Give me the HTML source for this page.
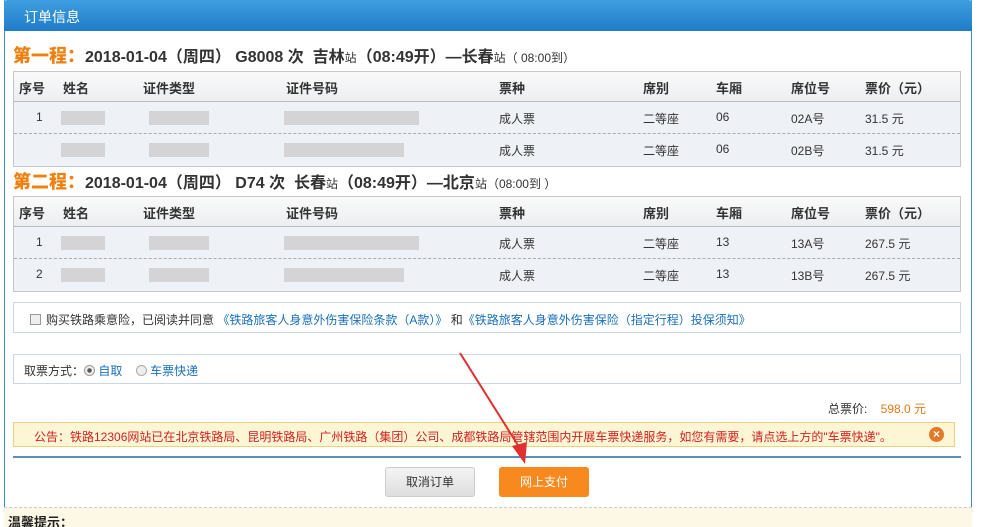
<!DOCTYPE html><html><head><meta charset="utf-8"><style>
*{margin:0;padding:0;box-sizing:border-box}
html,body{width:1000px;height:527px;overflow:hidden}
body{background:#fff;font-family:"Liberation Sans","Noto Sans CJK SC",sans-serif;font-size:12px;color:#333;position:relative}
.a{position:absolute}
.panel{left:4px;top:0;width:968px;height:527px;border:1px solid #3a8fd0;border-top:none}
.hd{left:4px;top:0;width:968px;height:31px;background:linear-gradient(#3f9ee0,#1f7cc8);color:#fff;font-size:14px;padding:7px 0 0 20px;border-radius:3px 3px 0 0}
.ttl{left:13px;font-size:16px;font-weight:bold;color:#333;white-space:nowrap}
.ttl b{color:#f0800d;font-size:18px}
.ttl s{text-decoration:none;font-size:12px;font-weight:normal}
.tb{left:13px;width:948px;height:96px;border:1px solid #c4c8cc}
.th{height:30px;background:linear-gradient(#fafafa,#eceef0);border-bottom:1px solid #b8bcc0;font-weight:bold;font-size:13px}
.r{height:32px;background:#eef1f5}
.r1{border-bottom:1px dashed #aab}
.c{position:absolute;top:8px;white-space:nowrap}
.th .c{top:6px}
.bl{position:absolute;background:#d4d4d6;height:14px;top:9px}
.box{left:13px;width:948px;border:1px solid #c8d8e8;background:#fff}
</style></head><body>
<div class="a panel"></div>
<div class="a hd">订单信息</div>

<div class="a ttl" style="top:42px"><b>第一程：</b>2018-01-04（周四） G8008 次 &nbsp;吉林<s>站</s>（08:49开）—长春<s>站（ 08:00到）</s></div>
<div class="a tb" style="top:71px">
<div class="th" style="position:relative"><span class="c" style="left:5px">序号</span><span class="c" style="left:49px">姓名</span><span class="c" style="left:129px">证件类型</span><span class="c" style="left:272px">证件号码</span><span class="c" style="left:485px">票种</span><span class="c" style="left:629px">席别</span><span class="c" style="left:702px">车厢</span><span class="c" style="left:777px">席位号</span><span class="c" style="left:851px">票价（元）</span></div>
<div class="r r1" style="position:relative"><span class="c" style="left:22px">1</span><i class="bl" style="left:47px;width:44px"></i><i class="bl" style="left:135px;width:60px"></i><i class="bl" style="left:270px;width:135px"></i><span class="c" style="left:485px">成人票</span><span class="c" style="left:629px">二等座</span><span class="c" style="left:702px">06</span><span class="c" style="left:777px">02A号</span><span class="c" style="left:851px">31.5 元</span></div>
<div class="r" style="position:relative"><i class="bl" style="left:47px;width:44px"></i><i class="bl" style="left:135px;width:60px"></i><i class="bl" style="left:270px;width:120px"></i><span class="c" style="left:485px">成人票</span><span class="c" style="left:629px">二等座</span><span class="c" style="left:702px">06</span><span class="c" style="left:777px">02B号</span><span class="c" style="left:851px">31.5 元</span></div>
</div>

<div class="a ttl" style="top:168px"><b>第二程：</b>2018-01-04（周四） D74 次 &nbsp;长春<s>站</s>（08:49开）—北京<s>站（08:00到 ）</s></div>
<div class="a tb" style="top:196px">
<div class="th" style="position:relative"><span class="c" style="left:5px">序号</span><span class="c" style="left:49px">姓名</span><span class="c" style="left:129px">证件类型</span><span class="c" style="left:272px">证件号码</span><span class="c" style="left:485px">票种</span><span class="c" style="left:629px">席别</span><span class="c" style="left:702px">车厢</span><span class="c" style="left:777px">席位号</span><span class="c" style="left:851px">票价（元）</span></div>
<div class="r r1" style="position:relative"><span class="c" style="left:22px">1</span><i class="bl" style="left:47px;width:44px"></i><i class="bl" style="left:135px;width:60px"></i><i class="bl" style="left:270px;width:135px"></i><span class="c" style="left:485px">成人票</span><span class="c" style="left:629px">二等座</span><span class="c" style="left:702px">13</span><span class="c" style="left:777px">13A号</span><span class="c" style="left:851px">267.5 元</span></div>
<div class="r" style="position:relative"><span class="c" style="left:22px">2</span><i class="bl" style="left:47px;width:44px"></i><i class="bl" style="left:135px;width:60px"></i><i class="bl" style="left:270px;width:120px"></i><span class="c" style="left:485px">成人票</span><span class="c" style="left:629px">二等座</span><span class="c" style="left:702px">13</span><span class="c" style="left:777px">13B号</span><span class="c" style="left:851px">267.5 元</span></div>
</div>

<div class="a box" style="top:302px;height:31px;padding:8px 0 0 16px;white-space:nowrap"><span style="display:inline-block;width:11px;height:11px;border:1px solid #999;background:#eee;vertical-align:-1px;margin-right:5px"></span>购买铁路乘意险，已阅读并同意 <span style="color:#1a6fb8">《铁路旅客人身意外伤害保险条款（A款）》</span> 和<span style="color:#1a6fb8">《铁路旅客人身意外伤害保险（指定行程）投保须知》</span></div>

<div class="a box" style="top:354px;height:30px;padding:7px 0 0 10px;white-space:nowrap">取票方式：<span style="display:inline-block;width:11px;height:11px;border:1px solid #999;border-radius:50%;background:radial-gradient(#555 30%,#eee 40%);vertical-align:-1px"></span> <span style="color:#1a6fb8">自取</span> &nbsp;&nbsp;&nbsp;<span style="display:inline-block;width:11px;height:11px;border:1px solid #aaa;border-radius:50%;background:#eee;vertical-align:-1px"></span> <span style="color:#1a6fb8">车票快递</span></div>

<div class="a" style="left:828px;top:400px">总票价: &nbsp;&nbsp;&nbsp;<span style="color:#e07a1a">598.0 元</span></div>

<div class="a" style="left:13px;top:422px;width:942px;height:25px;background:#fdf6d4;border:1px solid #eed27a;color:#d02020;padding:5px 0 0 20px;white-space:nowrap;font-size:12px">公告：铁路12306网站已在北京铁路局、昆明铁路局、广州铁路（集团）公司、成都铁路局管辖范围内开展车票快递服务，如您有需要，请点选上方的"车票快递"。</div>
<div class="a" style="left:929px;top:427px;width:15px;height:15px;border-radius:50%;background:#e37a2a;color:#fff;font-size:12px;font-weight:bold;text-align:center;line-height:15px">×</div>

<div class="a" style="left:13px;top:456px;width:948px;height:2px;background:#5e8fb8"></div>
<div class="a" style="left:385px;top:467px;width:90px;height:30px;background:linear-gradient(#f4f4f4,#dedede);border:1px solid #ccc;border-radius:3px;text-align:center;line-height:28px">取消订单</div>
<div class="a" style="left:499px;top:467px;width:90px;height:30px;background:#f7891e;border-radius:3px;color:#fff;text-align:center;line-height:30px">网上支付</div>
<svg class="a" style="left:455px;top:350px" width="80" height="120"><line x1="5" y1="3" x2="66" y2="100" stroke="#e03030" stroke-width="2"/><polygon points="70,114 57,96 72,92" fill="#e03030"/></svg>

<div class="a" style="left:4px;top:507px;width:968px;height:20px;background:#fdf8e6;border-top:1px dashed #ccc"></div>
<div class="a" style="left:8px;top:512px;font-weight:bold;font-size:13px;color:#222">温馨提示：</div>
</body></html>
